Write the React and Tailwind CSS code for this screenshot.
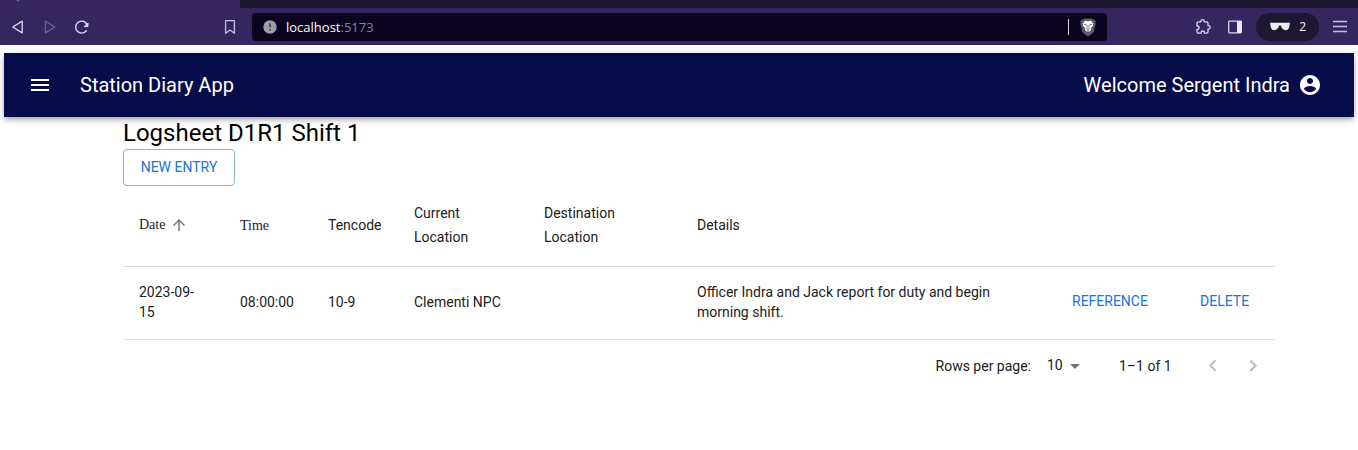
import { useState } from "react";

function MaterialIcon({ d, className }) {
  return (
    <svg viewBox="0 0 24 24" fill="currentColor" aria-hidden="true" className={className}>
      <path d={d} />
    </svg>
  );
}

const ICONS = {
  menu: "M3 18h18v-2H3v2zm0-5h18v-2H3v2zm0-7v2h18V6H3z",
  account:
    "M12 2C6.48 2 2 6.48 2 12s4.48 10 10 10 10-4.48 10-10S17.52 2 12 2zm0 3c1.66 0 3 1.34 3 3s-1.34 3-3 3-3-1.34-3-3 1.34-3 3-3zm0 14.2c-2.5 0-4.71-1.28-6-3.22.03-1.99 4-3.08 6-3.08 1.99 0 5.97 1.09 6 3.08-1.29 1.94-3.5 3.22-6 3.22z",
  arrowUp: "M4 12l1.41 1.41L11 7.83V20h2V7.83l5.58 5.59L20 12l-8-8-8 8z",
  arrowDrop: "M7 10l5 5 5-5z",
  left: "M15.41 16.09l-4.58-4.59 4.58-4.59L14 5.5l-6 6 6 6z",
  right: "M8.59 16.34l4.58-4.59-4.58-4.59L10 5.75l6 6-6 6z",
};

function BrowserBar() {
  return (
    <div className="bg-[#35265f]">
      <div className="flex h-2">
        <div className="w-60 pl-4">
          <svg viewBox="0 0 4 2" className="h-[2px] w-1" aria-hidden="true">
            <path d="M0 0h4L2 2z" fill="#6d6190" />
          </svg>
        </div>
        <div className="flex-1 bg-[#1b1730]" />
      </div>
      <div className="flex h-[37px] items-center pr-[10px] pl-[10px] text-[#e0d8f5]">
        <button type="button" aria-label="Back">
          <svg viewBox="0 0 16 16" className="size-4" fill="none" stroke="currentColor" strokeWidth="1.3" strokeLinejoin="round">
            <path d="M12.2 2.1v11.8L2.8 8z" />
          </svg>
        </button>
        <button type="button" aria-label="Forward" className="ml-4 text-[#6d6190]">
          <svg viewBox="0 0 16 16" className="size-4" fill="none" stroke="currentColor" strokeWidth="1.3" strokeLinejoin="round">
            <path d="M3.4 2.1v11.8L12.8 8z" />
          </svg>
        </button>
        <button type="button" aria-label="Reload" className="ml-4">
          <svg viewBox="0 0 16 16" className="size-4" fill="none" stroke="currentColor" strokeWidth="1.4" strokeLinecap="round">
            <path d="M12.4 11.8A6 6 0 1 1 13 5.4" />
            <path d="M14 4.4v3.2h-3.4z" fill="currentColor" strokeWidth="1" strokeLinejoin="round" />
          </svg>
        </button>
        <button type="button" aria-label="Bookmark" className="ml-[132px] text-[#c9bfe2]">
          <svg viewBox="0 0 16 16" className="size-4" fill="none" stroke="currentColor" strokeWidth="1.3" strokeLinejoin="round">
            <path d="M3.6 1.7h8.8v12.6L8 11l-4.4 3.3z" />
          </svg>
        </button>
        <div className="ml-[14px] flex h-7 flex-1 items-center rounded-sm bg-[#0b0421] px-[10px]">
          <svg viewBox="0 0 16 16" className="size-4" aria-hidden="true">
            <circle cx="8" cy="8" r="6.7" fill="#9d9da6" />
            <path d="M8 4.5v4M8 10v1.6" stroke="#33303f" strokeWidth="1.5" />
          </svg>
          <div className="ml-2 flex-1 font-['Open_Sans',sans-serif] text-[13px] leading-4 text-white">
            localhost<span className="text-[#85819a]">:5173</span>
          </div>
          <div className="h-4 w-px bg-[#d8d4e6]" />
          <svg viewBox="0 0 18 20" className="ml-[10px] h-5 w-[18px]" aria-hidden="true">
            <path d="M5.4 1.4h7.2l1.2 1.2 1.4-.2 1.5 2-.5 1.6.4 1.3-2 7.6-1.6 1.9L9 19.4l-4-2.600-1.600-1.900-2-7.600.4-1.300-.5-1.600 1.500-2 1.400.2z" fill="#5d5a69" />
            <path d="M6 3.800l3 .5 3-.5 2.400 3-.8 2.400-1.900 2 .3 1.700L9 15.200l-3-2.300.3-1.700-1.900-2-.8-2.400z" fill="#fff" />
            <path d="M5.200 7.200l2.500.9M12.800 7.200l-2.500.9M9 8.200v2.600M7.300 11.200L9 12.300l1.700-1.100M8 14l1-.6 1 .6" stroke="#4a4656" strokeWidth="0.9" fill="none" />
          </svg>
        </div>
        <button type="button" aria-label="Extensions" className="ml-[87px]">
          <svg viewBox="0 0 18 18" className="size-[18px]" fill="none" stroke="currentColor" strokeWidth="1.3" strokeLinejoin="round">
            <path d="M3 5.200q0-1.400 1.400-1.400h2.400V3.300a1.700 1.700 0 0 1 3.400 0v.5h2.400q1.400 0 1.400 1.400v2.400h.4a1.700 1.700 0 0 1 0 3.500H14v2.600q0 1.400-1.400 1.400h-2.200v-.5a1.600 1.600 0 0 0-3.200 0v.5H4.400Q3 15.100 3 13.700v-2.300h.5a1.700 1.700 0 0 0 0-3.400H3z" />
          </svg>
        </button>
        <button type="button" aria-label="Sidebar" className="ml-[14px]">
          <svg viewBox="0 0 18 18" className="size-[18px]">
            <rect x="2.700" y="3.200" width="12.600" height="11.600" rx="0.800" fill="none" stroke="currentColor" strokeWidth="1.300" />
            <path d="M11 3h4.500v12H11z" fill="#efeaff" />
          </svg>
        </button>
        <button type="button" className="ml-3 flex h-7 w-[63px] items-center justify-between rounded-full bg-[#1e1733] px-[13px] font-['Open_Sans',sans-serif] text-xs text-white">
          <svg viewBox="0 0 22 10" className="h-[10px] w-[22px]" aria-hidden="true">
            <path d="M1 .8h20l-.4 2c-.4 3-1 5.400-3.700 5.400-3 0-4.200-2-4.900-4.400-.3-.8-1.700-.8-2 0C9.300 6.200 8.100 8.200 5.100 8.200 2.400 8.200 1.800 5.800 1.400 2.800z" fill="#efeef4" />
          </svg>
          2
        </button>
        <button type="button" aria-label="Browser menu" className="ml-[13px]">
          <svg viewBox="0 0 16 16" className="size-4" stroke="#c9bfe2" strokeWidth="1.300">
            <path d="M1 2.500h14M1 7.500h14M1 12.500h14" />
          </svg>
        </button>
      </div>
    </div>
  );
}

function AppBar() {
  return (
    <header className="mx-1 mt-2 flex h-16 items-center justify-between bg-[#060b4a] pr-8 pl-6 text-white shadow-[0_2px_4px_-1px_rgba(0,0,0,0.2),0_4px_5px_0_rgba(0,0,0,0.14),0_1px_10px_0_rgba(0,0,0,0.12)]">
      <div className="flex items-center gap-7">
        <button type="button" aria-label="Open menu">
          <MaterialIcon d={ICONS.menu} className="size-6" />
        </button>
        <span className="text-xl">Station Diary App</span>
      </div>
      <button type="button" className="flex items-center gap-2 text-xl">
        Welcome Sergent Indra
        <MaterialIcon d={ICONS.account} className="size-6" />
      </button>
    </header>
  );
}

const ROWS = [
  {
    date: "2023-09-15",
    time: "08:00:00",
    code: "10-9",
    from: "Clementi NPC",
    to: "",
    details: "Officer Indra and Jack report for duty and begin morning shift.",
  },
];

function LogTable() {
  return (
    <table className="w-full table-fixed border-collapse text-left text-sm text-[#212121]">
      <colgroup>
        <col className="w-[101px]" />
        <col className="w-[88px]" />
        <col className="w-[86px]" />
        <col className="w-[130px]" />
        <col className="w-[153px]" />
        <col />
        <col className="w-32" />
        <col className="w-[99px]" />
      </colgroup>
      <thead>
        <tr className="border-b border-[#e0e0e0] leading-6 [&>th]:px-4 [&>th]:pt-[15px] [&>th]:pb-[17px] [&>th]:font-normal">
          <th scope="col" aria-sort="ascending">
            <button type="button" className="flex items-center gap-[5px] font-['Liberation_Serif',serif]">
              Date
              <MaterialIcon d={ICONS.arrowUp} className="size-[18px] text-[#757575]" />
            </button>
          </th>
          <th scope="col">
            <button type="button" className="font-['Liberation_Serif',serif]">Time</button>
          </th>
          <th scope="col">Tencode</th>
          <th scope="col">Current<br />Location</th>
          <th scope="col">Destination<br />Location</th>
          <th scope="col">Details</th>
          <td />
          <td />
        </tr>
      </thead>
      <tbody>
        {ROWS.map((row) => (
          <tr key={row.date + row.time} className="border-b border-[#e0e0e0] leading-5 [&>td]:pt-[15px] [&>td]:pb-[17px] [&>td]:pl-4">
            <td className="pr-6">{row.date}</td>
            <td>{row.time}</td>
            <td>{row.code}</td>
            <td>{row.from}</td>
            <td>{row.to}</td>
            <td className="pr-4">{row.details}</td>
            <td>
              <button type="button" className="px-2 pt-1 pb-[6px] text-[#1976d2]">REFERENCE</button>
            </td>
            <td>
              <button type="button" className="px-2 pt-1 pb-[6px] text-[#1976d2]">DELETE</button>
            </td>
          </tr>
        ))}
      </tbody>
    </table>
  );
}

function Pagination() {
  const [size, setSize] = useState("10");
  return (
    <div className="flex h-[52px] items-center justify-end pr-[2px] text-sm text-[#212121]">
      <label htmlFor="rows" className="pb-px">Rows per page:</label>
      <div className="ml-2 grid items-center">
        <select
          id="rows"
          value={size}
          onChange={(e) => setSize(e.target.value)}
          className="col-start-1 row-start-1 h-6 w-12 appearance-none bg-transparent pb-[3px] pl-2"
        >
          <option>10</option>
          <option>25</option>
          <option>50</option>
        </select>
        <MaterialIcon d={ICONS.arrowDrop} className="pointer-events-none col-start-1 row-start-1 size-6 justify-self-end text-[#757575]" />
      </div>
      <span className="ml-8 w-[54px] pb-px">1–1 of 1</span>
      <div className="ml-5 flex text-[#bdbdbd]">
        <button type="button" disabled aria-label="Previous page" className="p-2">
          <MaterialIcon d={ICONS.left} className="size-6" />
        </button>
        <button type="button" disabled aria-label="Next page" className="p-2">
          <MaterialIcon d={ICONS.right} className="size-6" />
        </button>
      </div>
    </div>
  );
}

export default function App() {
  return (
    <div className="min-h-screen bg-white font-[Roboto,sans-serif]">
      <BrowserBar />
      <AppBar />
      <main className="pl-10">
        <div className="mx-auto max-w-6xl">
          <h1 className="text-2xl leading-8 text-black">Logsheet D1R1 Shift 1</h1>
          <button type="button" className="block w-28 rounded border border-[#8cb4d8] pt-[5px] pb-[6px] text-sm leading-6 text-[#1976d2]">
            NEW ENTRY
          </button>
          <LogTable />
          <Pagination />
        </div>
      </main>
    </div>
  );
}
